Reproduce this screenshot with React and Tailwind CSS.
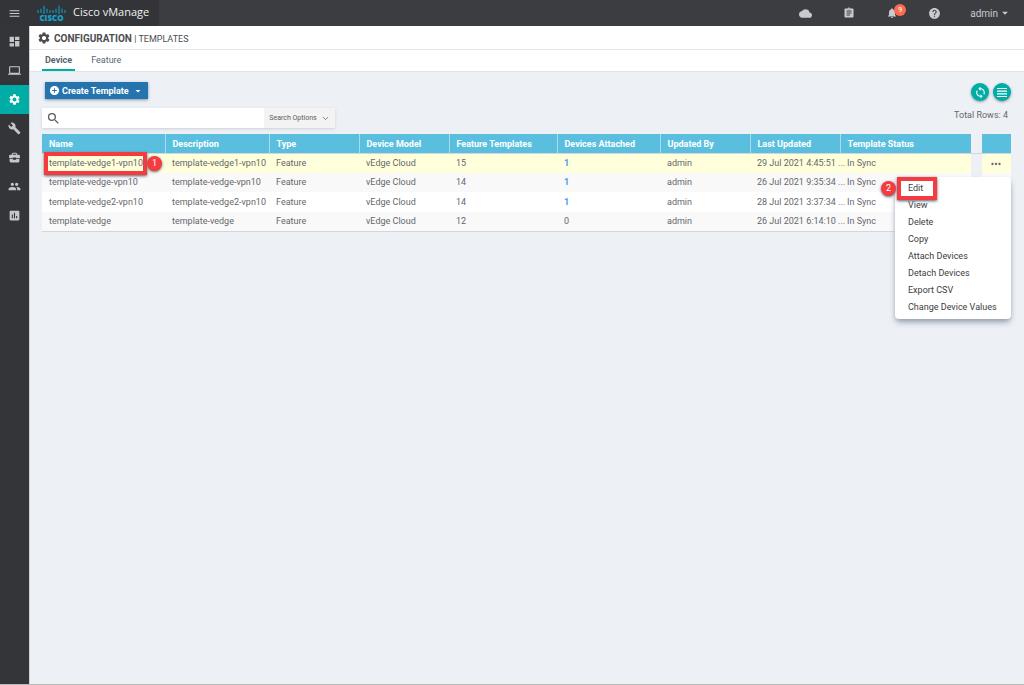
import React from 'react';
import {
  MdAddCircle,
  MdArrowDropDown,
  MdAssessment,
  MdAssignment,
  MdBuild,
  MdCloud,
  MdDashboard,
  MdHelp,
  MdLaptop,
  MdMenu,
  MdMoreHoriz,
  MdNotifications,
  MdPeople,
  MdSearch,
  MdSettings,
  MdSync,
} from 'react-icons/md';
import { FiChevronDown } from 'react-icons/fi';

const ToolboxIcon = ({ size }) => (
  <svg width={size} height={size} viewBox="0 0 24 24" fill="currentColor" aria-hidden="true">
    <path d="M9 3h6l2 2v2h3a2 2 0 0 1 2 2v4h-7v-1H9v1H2V9a2 2 0 0 1 2-2h3V5zm0 4h6V5H9z" fillRule="evenodd" />
    <path d="M3 14.5h6v1.5h6v-1.5h6V19a2 2 0 0 1-2 2H5a2 2 0 0 1-2-2z" />
  </svg>
);

const LinesIcon = () => (
  <svg width="12" height="9" viewBox="0 0 12 9" fill="currentColor" aria-hidden="true">
    <path d="M1 0h10v1H1zM1 2.6h10v1.2H1zM1 5.2h10v1.2H1zM1 8h10v1H1z" />
  </svg>
);

const navItems = [
  { label: 'Dashboard', icon: MdDashboard },
  { label: 'Monitor', icon: MdLaptop },
  { label: 'Configuration', icon: MdSettings, active: true },
  { label: 'Tools', icon: MdBuild },
  { label: 'Maintenance', icon: ToolboxIcon },
  { label: 'Administration', icon: MdPeople },
  { label: 'Analytics', icon: MdAssessment },
];

const columns = [
  { title: 'Name', width: 'w-[123px]' },
  { title: 'Description', width: 'w-[104px]' },
  { title: 'Type', width: 'w-[90px]' },
  { title: 'Device Model', width: 'w-[90px]' },
  { title: 'Feature Templates', width: 'w-[108px]' },
  { title: 'Devices Attached', width: 'w-[103px]' },
  { title: 'Updated By', width: 'w-[90px]' },
  { title: 'Last Updated', width: 'w-[90px]' },
  { title: 'Template Status', width: '' },
];

const rows = [
  { name: 'template-vedge1-vpn10', features: 15, attached: 1, updated: '29 Jul 2021 4:45:51 ...', selected: true },
  { name: 'template-vedge-vpn10', features: 14, attached: 1, updated: '26 Jul 2021 9:35:34 ...' },
  { name: 'template-vedge2-vpn10', features: 14, attached: 1, updated: '28 Jul 2021 3:37:34 ...' },
  { name: 'template-vedge', features: 12, attached: 0, updated: '26 Jul 2021 6:14:10 ...' },
];

const menuItems = [
  'Edit',
  'View',
  'Delete',
  'Copy',
  'Attach Devices',
  'Detach Devices',
  'Export CSV',
  'Change Device Values',
];

// x, top, bottom of each bar in the bridge mark
const bridgeBars = [
  [1, 5.5, 7.5],
  [4, 4, 7.5],
  [7, 1, 8.5],
  [10, 4, 7.5],
  [13, 5.5, 7.5],
  [16, 5.5, 7.5],
  [19, 4, 7.5],
  [22, 1, 8.5],
  [25, 4, 7.5],
  [28, 5.5, 7.5],
];

const CiscoLogo = () => (
  <div className="flex flex-col items-center">
    <svg width="29" height="9" viewBox="0 0 29 9" stroke="#1296b8" strokeWidth="1.2" strokeLinecap="round" aria-hidden="true">
      {bridgeBars.map(([x, top, bottom]) => (
        <line key={x} x1={x} x2={x} y1={top} y2={bottom} />
      ))}
    </svg>
    <span className="text-[8px] leading-[8px] font-extrabold text-[#12a5cb] font-['Open_Sans',sans-serif]">CISCO</span>
  </div>
);

const Header = () => (
  <header className="flex h-[26px] bg-[#3c3d40] text-[#c9cacb]">
    <div className="flex w-[159px] items-center bg-[#333438]">
      <button aria-label="Menu" className="flex w-[29px] justify-center">
        <MdMenu size={13} />
      </button>
      <div className="ml-2">
        <CiscoLogo />
      </div>
      <span className="ml-[7px] pb-[2px] text-[11px] leading-[16px] font-medium text-[#f0f1f2] font-['Open_Sans',sans-serif]">
        Cisco vManage
      </span>
    </div>
    <div className="flex flex-1 items-center justify-end">
      <button aria-label="Cloud" className="flex w-[43px] justify-center">
        <MdCloud size={13} />
      </button>
      <button aria-label="Tasks" className="flex w-[43px] justify-center">
        <MdAssignment size={12} />
      </button>
      <button aria-label="Alarms" className="relative flex w-[43px] justify-center">
        <MdNotifications size={12} />
        <span className="absolute -top-[3px] left-[24px] flex size-3 items-center justify-center rounded-full bg-[#fb6a51] text-[7px] text-white">
          9
        </span>
      </button>
      <button aria-label="Help" className="flex w-[43px] justify-center">
        <MdHelp size={13} />
      </button>
      <button className="ml-[14px] mr-3 flex items-center text-[10px]">
        admin
        <MdArrowDropDown size={14} />
      </button>
    </div>
  </header>
);

const Sidebar = () => (
  <nav className="w-[29px] bg-[#343538] pt-px">
    {navItems.map(({ label, icon: Icon, active }) => (
      <a
        key={label}
        href="#"
        aria-label={label}
        className={`flex h-[29px] items-center justify-center ${active ? 'bg-[#00ada6] text-white' : 'text-[#c6c7c9]'}`}
      >
        <Icon size={13} />
      </a>
    ))}
  </nav>
);

const Toolbar = () => (
  <div className="flex justify-between">
    <div>
      <button className="ml-[3px] flex h-[17px] items-center bg-[#2574ad] pl-1 pr-[4px] text-[9px] font-bold text-white shadow-sm shadow-gray-400">
        <MdAddCircle size={11} />
        <span className="ml-0.5 mr-[3px] pt-[2px]">Create Template</span>
        <MdArrowDropDown size={12} />
      </button>
      <div className="mt-[9px] flex h-[20px] w-[293px] bg-white shadow-sm shadow-gray-300">
        <label htmlFor="search" className="flex w-[22px] items-center justify-center text-[#5b5c5e]">
          <MdSearch size={15} />
        </label>
        <input id="search" aria-label="Search" className="min-w-0 flex-1 text-[9px] outline-none" />
        <button className="flex w-[71px] items-center justify-center gap-1 bg-[#f3f3f4] text-[7px] text-[#5b5c5e]">
          Search Options
          <FiChevronDown size={9} />
        </button>
      </div>
    </div>
    <div className="flex flex-col items-end">
      <div className="flex gap-1 pt-px text-white">
        <button aria-label="Refresh" className="flex size-[18px] items-center justify-center rounded-full bg-[#00ada6] shadow-sm shadow-gray-400">
          <MdSync size={13} />
        </button>
        <button aria-label="Columns" className="flex size-[18px] items-center justify-center rounded-full bg-[#00ada6] shadow-sm shadow-gray-400">
          <LinesIcon />
        </button>
      </div>
      <p className="mr-[3px] mt-2 text-[9px] leading-[12px] text-[#66676a]">Total Rows: 4</p>
    </div>
  </div>
);

const Marker = ({ children, className }) => (
  <span
    className={`absolute flex size-[15px] items-center justify-center rounded-full bg-[#f43c40] text-[9px] text-white shadow-sm shadow-gray-500 ${className}`}
  >
    {children}
  </span>
);

const ActionMenu = () => (
  <ul className="absolute right-0 top-[23px] z-10 w-[116px] rounded-sm bg-white py-[3px] text-left text-[9px] leading-[17px] text-[#3c3d40] shadow-md shadow-gray-400">
    {menuItems.map((item) => (
      <li key={item}>
        <button className="block w-full pl-[13px] text-left">{item}</button>
      </li>
    ))}
    <li aria-hidden="true" className="absolute left-[2px] top-0 h-[23px] w-[40px] border-4 border-[#f43c40] shadow-sm shadow-gray-500" />
    <li>
      <Marker className="-left-[14px] top-[4px]">2</Marker>
    </li>
  </ul>
);

const TemplateTable = () => (
  <table className="mt-[6px] w-full table-fixed text-left text-[9px] leading-[12px] text-[#66676a]">
    <colgroup>
      {columns.map(({ title, width }) => (
        <col key={title} className={width} />
      ))}
      <col className="w-[11px]" />
      <col className="w-[29px]" />
    </colgroup>
    <thead>
      <tr className="h-[19px]">
        {columns.map(({ title }) => (
          <th key={title} className="border-l border-[#a9dced] bg-[#5abfde] pl-[7px] pt-[2px] font-bold text-white first:border-l-0">
            {title}
          </th>
        ))}
        <td />
        <td className="bg-[#5abfde]" />
      </tr>
    </thead>
    <tbody className="border-y border-[#d4d7da]">
      {rows.map(({ name, features, attached, updated, selected }) => (
        <tr
          key={name}
          className={`odd:h-[20px] even:h-[19px] *:pl-[7px] *:pb-px ${selected ? 'bg-[#ffffdc]' : 'bg-white even:bg-[#f9f9fa]'}`}
        >
          <td className="relative">
            {name}
            {selected && (
              <>
                <span className="absolute -top-[2px] left-[2px] h-[23px] w-[103px] border-4 border-[#f43c40] shadow-sm shadow-gray-500" />
                <Marker className="left-[105px] top-[2px]">1</Marker>
              </>
            )}
          </td>
          <td>{name}</td>
          <td>Feature</td>
          <td>vEdge Cloud</td>
          <td>{features}</td>
          <td>
            {attached > 0 ? (
              <a href="#" className="font-bold text-[#4a9cf5]">
                {attached}
              </a>
            ) : (
              attached
            )}
          </td>
          <td>admin</td>
          <td className="whitespace-nowrap">{updated}</td>
          <td>In Sync</td>
          <td className="bg-[#edf1f6]" />
          <td className="relative">
            {selected && (
              <>
                <button aria-label="Row actions" className="mt-0.5 block">
                  <MdMoreHoriz size={14} />
                </button>
                <ActionMenu />
              </>
            )}
          </td>
        </tr>
      ))}
    </tbody>
  </table>
);

export default function App() {
  return (
    <div className="flex min-h-screen flex-col bg-[#edf1f6] font-['Roboto',sans-serif]">
      <Header />
      <div className="flex flex-1 border-b border-[#b9babc]">
        <Sidebar />
        <main className="flex-1 border-l border-[#d0d1d4]">
          <div className="flex h-[24px] items-center border-b border-[#e3e4e7] bg-white pl-[7px] text-[#4c4d50]">
            <MdSettings size={14} />
            <h1 className="ml-[3px] pt-[2px] text-[9px]">
              <span className="text-[10px] font-bold">CONFIGURATION</span> | TEMPLATES
            </h1>
          </div>
          <div className="flex h-[22px] gap-4 border-b border-[#e3e4e7] bg-white pl-3 text-[9px] text-[#55666f]">
            <a href="#" className="flex items-center border-b-2 border-[#00ada6] px-[3px] pt-[2px] font-bold">
              Device
            </a>
            <a href="#" className="flex items-center pt-px">
              Feature
            </a>
          </div>
          <div className="pl-3 pr-[13px] pt-[10px]">
            <Toolbar />
            <TemplateTable />
          </div>
        </main>
      </div>
    </div>
  );
}
